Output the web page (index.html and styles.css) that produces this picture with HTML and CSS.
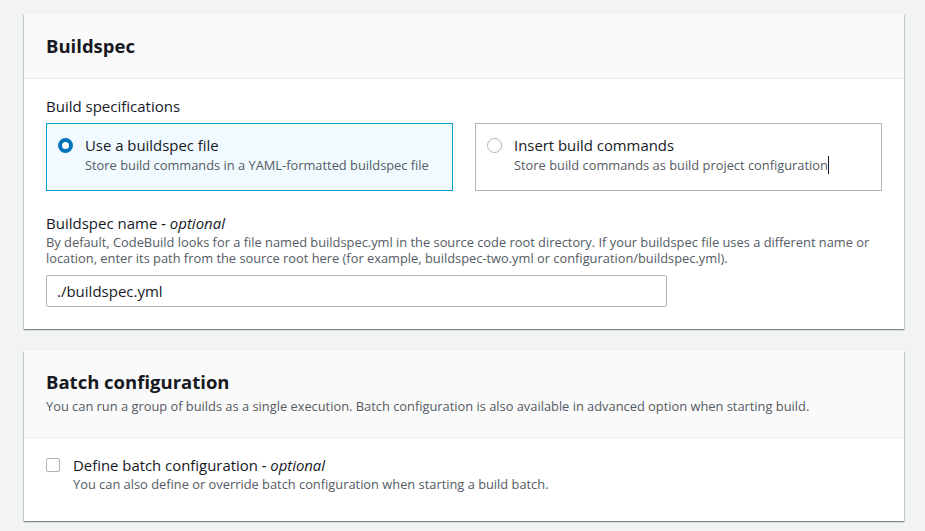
FILE: index.html
```html
<!DOCTYPE html>
<html>
<head>
<meta charset="utf-8">
<link rel="stylesheet" href="styles.css">
</head>
<body>
<div class="page">
  <section class="card">
    <header class="card-head">
      <h2 class="card-title">Buildspec</h2>
    </header>
    <div class="card-body">
      <div class="field">
        <div class="field-label">Build specifications</div>
        <div class="tiles">
          <label class="tile tile-on">
            <span class="radio radio-on"></span>
            <span class="tile-text">
              <span class="tile-title">Use a buildspec file</span>
              <span class="tile-desc">Store build commands in a YAML-formatted buildspec file</span>
            </span>
          </label>
          <label class="tile">
            <span class="radio"></span>
            <span class="tile-text">
              <span class="tile-title">Insert build commands</span>
              <span class="tile-desc">Store build commands as build project configuratio<span class="caret">n</span></span>
            </span>
          </label>
        </div>
      </div>
      <div class="field field-name">
        <div class="field-label">Buildspec name <i>- optional</i></div>
        <div class="field-desc">By default, CodeBuild looks for a file named buildspec.yml in the source code root directory. If your buildspec file uses a different name or location, enter its path from the source root here (for example, buildspec-two.yml or configuration/buildspec.yml).</div>
        <div class="input">./buildspec.yml</div>
      </div>
    </div>
  </section>

  <section class="card">
    <header class="card-head card-head-desc">
      <h2 class="card-title">Batch configuration</h2>
      <div class="card-sub">You can run a group of builds as a single execution. Batch configuration is also available in advanced option when starting build.</div>
    </header>
    <div class="card-body card-body-batch">
      <label class="check-row">
        <span class="checkbox"></span>
        <span class="tile-text">
          <span class="check-title">Define batch configuration <i>- optional</i></span>
          <span class="tile-desc">You can also define or override batch configuration when starting a build batch.</span>
        </span>
      </label>
    </div>
  </section>
</div>
</body>
</html>
```

FILE: styles.css
```css
* { box-sizing: border-box; }
html, body { margin: 0; padding: 0; }
body {
  background: #f2f3f3;
  font-family: "Open Sans", "Noto Sans", sans-serif;
  color: #16191f;
  width: 925px;
  height: 531px;
  overflow: hidden;
}
.page {
  padding: 14px 21px 0 24px;
  display: flex;
  flex-direction: column;
  gap: 22px;
}
.card {
  background: #fff;
  box-shadow: 0 1px 1px 0 rgba(0,28,36,.3), 1px 1px 1px 0 rgba(0,28,36,.15), -1px 1px 1px 0 rgba(0,28,36,.15);
}
.card-head {
  background: #fafafa;
  border-bottom: 1px solid #eaeded;
  height: 65px;
  padding: 20px 22px 0;
}
.card-head-desc { height: 87px; padding-top: 19px; }
.card-title {
  margin: 0;
  font-size: 18.5px;
  font-weight: 700;
  line-height: 24px;
}
.card-sub {
  font-size: 12.85px;
  color: #545b64;
  line-height: 18px;
  margin-top: 3px;
}
.card-body { padding: 17px 22px 22px; }
.field-label {
  font-size: 15px;
  line-height: 20px;
}
.field-label i, .check-title i { font-style: italic; }
.tiles {
  display: flex;
  gap: 22px;
  margin-top: 7px;
}
.tile {
  flex: 0 0 407px;
  height: 68px;
  border: 1px solid #aab7b8;
  display: flex;
  padding: 10px 0 0 11px;
  gap: 12px;
}
.tile-on {
  border-color: #00a1c9;
  background: #f1faff;
}
.radio {
  flex: 0 0 15px;
  width: 15px;
  height: 15px;
  border-radius: 50%;
  border: 1px solid #aab7b8;
  background: #fff;
  margin-top: 4px;
}
.radio-on {
  border: 4px solid #0073bb;
}
.tile-text { display: flex; flex-direction: column; }
.tile-title, .check-title {
  font-size: 14.9px;
  line-height: 22px;
}
.check-title { line-height: 20px; }
.tile-desc {
  font-size: 12.85px;
  line-height: 18px;
  color: #545b64;
}
.caret { border-right: 1px solid #16191f; }
.field-name { margin-top: 22px; }
.field-desc {
  font-size: 12.85px;
  line-height: 16px;
  color: #545b64;
  margin-top: 1px;
}
.input {
  margin-top: 9px;
  width: 621px;
  height: 32px;
  border: 1px solid #aab7b8;
  border-radius: 2px;
  font-size: 15px;
  line-height: 30px;
  padding: 0 10px;
}
.card-body-batch { padding: 17px 22px 0; height: 83px; }
.check-row { display: flex; gap: 13px; }
.checkbox {
  flex: 0 0 14px;
  width: 14px;
  height: 14px;
  border: 1px solid #aab7b8;
  border-radius: 2px;
  background: #fff;
  margin-top: 3px;
}
```
